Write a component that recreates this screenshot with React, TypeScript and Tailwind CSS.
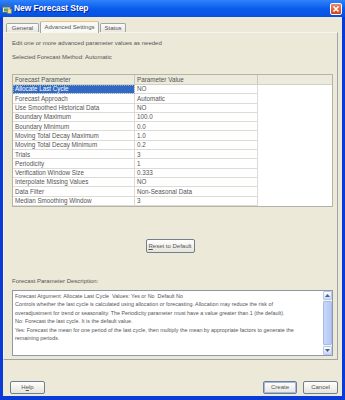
import React from "react";

const params: [string, string][] = [
  ["Allocate Last Cycle", "NO"],
  ["Forecast Approach", "Automatic"],
  ["Use Smoothed Historical Data", "NO"],
  ["Boundary Maximum", "100.0"],
  ["Boundary Minimum", "0.0"],
  ["Moving Total Decay Maximum", "1.0"],
  ["Moving Total Decay Minimum", "0.2"],
  ["Trials", "3"],
  ["Periodicity", "1"],
  ["Verification Window Size", "0.333"],
  ["Interpolate Missing Values", "NO"],
  ["Data Filter", "Non-Seasonal Data"],
  ["Median Smoothing Window", "3"],
];

const descLines = [
  "Forecast Argument: Allocate Last Cycle  Values: Yes or No  Default No",
  "Controls whether the last cycle is calculated using allocation or forecasting. Allocation may reduce the risk of",
  "overadjustment for trend or seasonality. The Periodicity parameter must have a value greater than 1 (the default).",
  "No: Forecast the last cycle. It is the default value.",
  "Yes: Forecast the mean for one period of the last cycle, then multiply the mean by appropriate factors to generate the",
  "remaining periods.",
];

const XpButton = ({ label, className = "" }: { label: React.ReactNode; className?: string }) => (
  <div
    className={`flex items-center justify-center h-[13px] rounded-[2px] border border-[#6f7f90] bg-gradient-to-b from-white to-[#e6e4da] text-[6px] text-[#555] ${className}`}
  >
    {label}
  </div>
);

export default function App() {
  return (
    <div
      className="w-[345px] h-[400px] flex flex-col bg-[#0b3bd6] overflow-hidden"
      style={{ fontFamily: '"Liberation Sans", Arial, sans-serif' }}
    >
      {/* title bar */}
      <div className="h-[17px] shrink-0 flex items-center pl-[2px] pr-[3px] bg-gradient-to-b from-[#2f83fb] via-[#0a5ced] to-[#0550e0]">
        <svg width="10" height="10" viewBox="0 0 10 10" className="mr-[2px]">
          <rect x="0.5" y="1.5" width="8" height="7" fill="#d8e4f0" stroke="#4a6a8a" />
          <rect x="1" y="2" width="7" height="1.5" fill="#3a6ea5" />
          <rect x="2" y="4.5" width="4" height="3" fill="#5aa05a" />
          <rect x="5.5" y="5" width="4" height="4.5" fill="#e8d890" stroke="#8a7a40" strokeWidth="0.6" />
        </svg>
        <span className="text-white font-bold text-[8.5px] tracking-[-0.1px] [text-shadow:1px_1px_0_#0a1e8a]">
          New Forecast Step
        </span>
        <div className="ml-auto w-[12px] h-[12px] rounded-[2px] border border-white bg-gradient-to-b from-[#e88a6a] to-[#d2411c] flex items-center justify-center">
          <svg width="8" height="8" viewBox="0 0 8 8">
            <path d="M1.5 1.5 L6.5 6.5 M6.5 1.5 L1.5 6.5" stroke="white" strokeWidth="1.6" />
          </svg>
        </div>
      </div>

      {/* dialog body */}
      <div className="flex-1 mx-[3px] mb-[4px] bg-[#ece9d8] flex flex-col">
        {/* tabs */}
        <div className="mt-[4px] h-[11px] flex items-end pl-[3px]">
          <div className="h-[9px] w-[33px] border border-b-0 border-[#a0a6a7] bg-gradient-to-b from-[#fcfcfe] to-[#e8e6dc] rounded-t-[2px] flex items-center justify-center text-[6px] text-[#555]">
            General
          </div>
          <div className="h-[12px] w-[59px] -mb-[1px] ml-[1px] border border-b-0 border-[#a0a6a7] border-t-[#f0c080] bg-[#f8f8f4] rounded-t-[2px] flex items-center justify-center text-[6px] text-[#555] relative z-10">
            Advanced Settings
          </div>
          <div className="h-[9px] w-[26px] ml-[1px] border border-b-0 border-[#a0a6a7] bg-gradient-to-b from-[#fcfcfe] to-[#e8e6dc] rounded-t-[2px] flex items-center justify-center text-[6px] text-[#555]">
            Status
          </div>
        </div>

        {/* tab panel */}
        <div className="w-[335px] h-[328px] border border-[#a0a6a7] border-t-[#f4f3ee] border-l-[#f4f3ee] bg-[#ece9d8] flex flex-col pl-[8px] pr-[3px]">
          <div className="mt-[7px] text-[6px] text-[#555] leading-[7px]">
            Edit one or more advanced parameter values as needed
          </div>
          <div className="mt-[7px] text-[6px] text-[#555] leading-[7px]">
            Selected Forecast Method: Automatic
          </div>

          {/* table */}
          <div className="mt-[13px] w-[321px] h-[133px] border border-[#b5b3a8] bg-white flex flex-col">
            <div className="h-[10px] flex bg-[#ebeadb] border-b border-[#d2d0c4] text-[6.3px] text-[#555]">
              <div className="w-[122px] border-r border-[#c9c7ba] pl-[2px] flex items-center">Forecast Parameter</div>
              <div className="w-[123px] border-r border-[#c9c7ba] pl-[2px] flex items-center">Parameter Value</div>
              <div className="flex-1" />
            </div>
            {params.map(([name, value], i) => (
              <div key={name} className="h-[9.3px] flex text-[6.3px] text-[#555]">
                <div
                  className={`w-[122px] border-r border-b border-[#dedbd6] pl-[2px] flex items-center ${
                    i === 0 ? "bg-[#316ac5] text-white outline outline-1 outline-dotted outline-[#9ab] -outline-offset-1" : ""
                  }`}
                >
                  {name}
                </div>
                <div className="w-[123px] border-r border-b border-[#dedbd6] pl-[2px] flex items-center">{value}</div>
              </div>
            ))}
          </div>

          <div className="mt-[32px] flex justify-center pr-[6px]">
            <XpButton label={<span><span className="underline">R</span>eset to Default</span>} className="w-[49px] h-[14px]" />
          </div>

          <div className="mt-[25px] text-[6px] text-[#555] leading-[7px]">Forecast Parameter Description:</div>

          <div className="mt-[5px] w-[321px] h-[66px] border border-[#8a9aaa] bg-white flex">
            <div className="flex-1 pl-[2px] pt-[1px] text-[5.4px] leading-[8.4px] text-[#555] whitespace-nowrap overflow-hidden">
              {descLines.map((l) => (
                <div key={l} className="whitespace-pre">{l}</div>
              ))}
            </div>
            <div className="w-[9px] flex flex-col bg-[#f4f4f0]">
              <div className="h-[9px] bg-gradient-to-b from-white to-[#c7d6f5] border border-[#b8c8ea] rounded-[1px] flex items-center justify-center">
                <svg width="5" height="3" viewBox="0 0 5 3"><path d="M0 3 L2.5 0 L5 3Z" fill="#4d6185" /></svg>
              </div>
              <div className="flex-1 my-[1px] bg-gradient-to-r from-[#c8d7f8] to-[#b4c8f4] border border-[#a6bbe8] rounded-[1px]" />
              <div className="h-[9px] bg-gradient-to-b from-white to-[#c7d6f5] border border-[#b8c8ea] rounded-[1px] flex items-center justify-center">
                <svg width="5" height="3" viewBox="0 0 5 3"><path d="M0 0 L2.5 3 L5 0Z" fill="#4d6185" /></svg>
              </div>
            </div>
          </div>
        </div>

        {/* footer buttons */}
        <div className="mt-[21px] flex items-center pl-[7px] pr-[4px]">
          <XpButton label={<span>H<span className="underline">e</span>lp</span>} className="w-[35px]" />
          <div className="flex-1" />
          <XpButton label="Create" className="w-[34px] shadow-[inset_0_0_0_1px_#9db9eb]" />
          <XpButton label="Cancel" className="w-[35px] ml-[6px]" />
        </div>
      </div>
    </div>
  );
}
